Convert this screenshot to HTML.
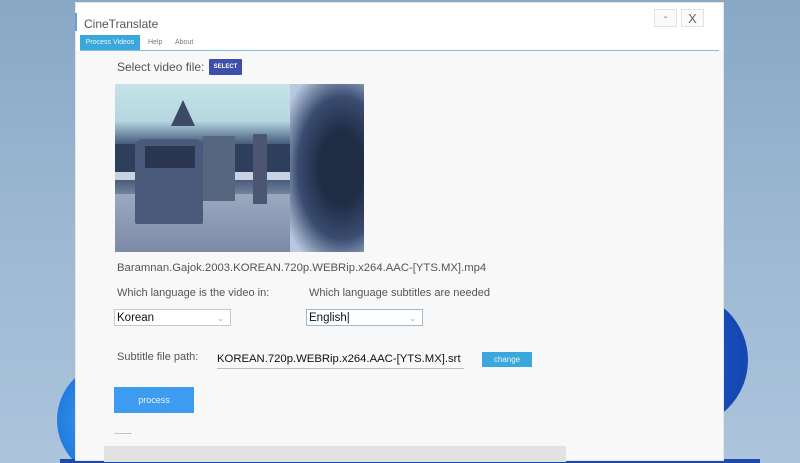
<!DOCTYPE html>
<html><head><meta charset="utf-8"><style>
*{margin:0;padding:0;box-sizing:border-box}
html,body{width:800px;height:463px;overflow:hidden}
body{position:relative;font-family:"Liberation Sans",sans-serif;background:linear-gradient(180deg,#88a8c6 0%,#9cb8d2 50%,#acc4dc 100%)}
.abs{position:absolute}
.win{left:75px;top:2px;width:649px;height:459px;background:#f8f8f8;border:1px solid #e6e6e6}
.top{left:0;top:0;width:647px;height:47px;background:#fff}
.t{color:#555;font-size:11px;white-space:nowrap}
.sel{background:#fff;border:1px solid #c8c8c8;height:17px;font-size:11.5px;color:#111;padding:1px 2px;line-height:14px}
.sel span{position:absolute;right:6px;top:2px;color:#aaa;font-size:8px}
</style></head><body>
<div class="abs" style="left:57px;top:362px;width:116px;height:116px;border-radius:50%;background:radial-gradient(circle at 40% 50%,#3aa2f0,#1a6fd8 70%)"></div>
<div class="abs" style="left:612px;top:292px;width:136px;height:136px;border-radius:50%;background:radial-gradient(circle at 40% 50%,#1f5fcf,#1446b0 80%)"></div>
<div class="abs" style="left:60px;top:459px;width:700px;height:4px;background:#1d4aa8"></div>
<div class="abs win">
 <div class="abs top"></div>
 <div class="abs" style="left:-1px;top:10px;width:2px;height:18px;background:#6a9fd0"></div>
 <div class="abs" style="left:8px;top:14px;font-size:12px;color:#555">CineTranslate</div>
 <div class="abs" style="left:578px;top:6px;width:23px;height:18px;border:1px solid #e2e2e2;background:#fafafa;font-size:10px;color:#666;text-align:center;line-height:16px">-</div>
 <div class="abs" style="left:605px;top:6px;width:23px;height:18px;border:1px solid #e2e2e2;background:#fafafa;font-size:13px;color:#666;text-align:center;line-height:17px">X</div>
 <div class="abs" style="left:4px;top:32px;width:60px;height:16px;background:#3aa8dc;color:#eaf6fc;font-size:7px;text-align:center;line-height:16px">Process Videos</div>
 <div class="abs" style="left:72px;top:36px;font-size:7px;color:#777">Help</div>
 <div class="abs" style="left:99px;top:36px;font-size:7px;color:#777">About</div>
 <div class="abs" style="left:4px;top:47px;width:639px;height:1px;background:#7fbfd8"></div>
 <div class="abs" style="left:41px;top:57px;font-size:12px;color:#555">Select video file:</div>
 <div class="abs" style="left:133px;top:56px;width:33px;height:16px;background:#3d4fa8;color:#fff;font-size:6px;font-weight:bold;text-align:center;line-height:16px;border-radius:1px">SELECT</div>
 <div class="abs" style="left:39px;top:81px;width:249px;height:168px;overflow:hidden;background:linear-gradient(180deg,#c5e3e8 0%,#b5d7e0 22%,#4a6080 35%,#3e5270 55%,#8a98b0 70%,#6f7f9a 100%)">
  <div class="abs" style="left:0;top:60px;width:249px;height:30px;background:#2e3f5c"></div>
  <div class="abs" style="left:0;top:88px;width:180px;height:8px;background:#c8d2e0"></div>
  <div class="abs" style="left:0;top:110px;width:249px;height:58px;background:linear-gradient(180deg,#9aa8c0,#7d8aa6)"></div>
  <div class="abs" style="left:20px;top:55px;width:68px;height:85px;background:#4a5a7a;border-radius:8px 8px 2px 2px"></div>
  <div class="abs" style="left:30px;top:62px;width:50px;height:22px;background:#2b3650"></div>
  <div class="abs" style="left:88px;top:52px;width:32px;height:65px;background:#56667f"></div>
  <div class="abs" style="left:56px;top:16px;width:0;height:0;border-left:12px solid transparent;border-right:12px solid transparent;border-bottom:26px solid #3b4a66"></div>
  <div class="abs" style="left:138px;top:50px;width:14px;height:70px;background:#4c5670"></div>
  <div class="abs" style="left:175px;top:0;width:74px;height:168px;background:radial-gradient(ellipse at 70% 50%,#1f2c44 30%,#3a4c70 60%,#b8c8e0 90%)"></div>
 </div>
 <div class="abs t" style="left:41px;top:259px;font-size:11.3px">Baramnan.Gajok.2003.KOREAN.720p.WEBRip.x264.AAC-[YTS.MX].mp4</div>
 <div class="abs t" style="left:41px;top:284px">Which language is the video in:</div>
 <div class="abs t" style="left:233px;top:284px">Which language subtitles are needed</div>
 <div class="abs sel" style="left:38px;top:306px;width:117px">Korean<span>⌄</span></div>
 <div class="abs sel" style="left:230px;top:306px;width:117px;border-color:#9bc">English|<span>⌄</span></div>
 <div class="abs t" style="left:41px;top:348px">Subtitle file path:</div>
 <div class="abs" style="left:141px;top:350px;font-size:11.3px;color:#111;white-space:nowrap">KOREAN.720p.WEBRip.x264.AAC-[YTS.MX].srt</div>
 <div class="abs" style="left:141px;top:365px;width:247px;height:1px;background:#bbb"></div>
 <div class="abs" style="left:406px;top:349px;width:50px;height:15px;background:#3aa8dc;color:#e8f6fc;font-size:8px;text-align:center;line-height:15px">change</div>
 <div class="abs" style="left:38px;top:384px;width:80px;height:26px;background:#3d9bf0;color:#eaf4ff;font-size:9px;text-align:center;line-height:26px">process</div>
 <div class="abs" style="left:38px;top:424px;font-size:8px;color:#777;letter-spacing:-0.5px">..........</div>
 <div class="abs" style="left:28px;top:443px;width:462px;height:16px;background:#e2e2e2"></div>
</div>
</body></html>
